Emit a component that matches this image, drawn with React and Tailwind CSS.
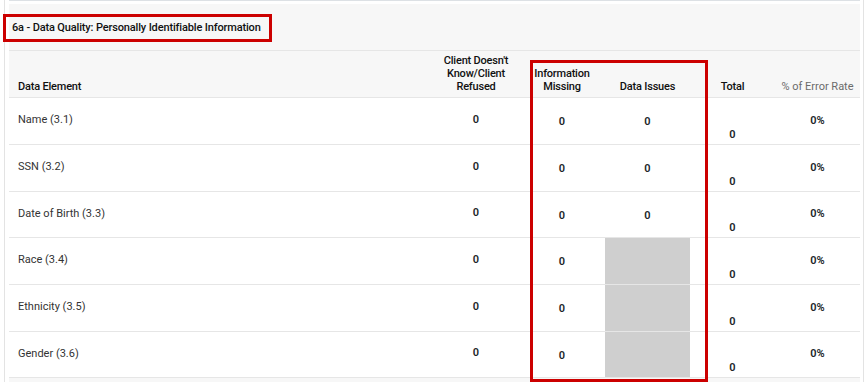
import React from "react";

const rows = [
  { name: "Name (3.1)", issues: "0", h: "h-[47px]" },
  { name: "SSN (3.2)", issues: "0", h: "h-[47px]" },
  { name: "Date of Birth (3.3)", issues: "0", h: "h-[46px]" },
  { name: "Race (3.4)", issues: null, h: "h-[47px]" },
  { name: "Ethnicity (3.5)", issues: null, h: "h-[47px]" },
  { name: "Gender (3.6)", issues: null, h: "h-[46px]" },
];

export default function App() {
  return (
    <div className="relative w-[866px] h-[382px] overflow-hidden bg-white font-['Roboto',sans-serif] text-[11px] text-[#212529]">
      <div className="flex h-full">
        <div className="w-[4px] shrink-0" />
        <div className="w-px shrink-0 bg-[#e3e3e3]" />
        <div className="w-[4px] shrink-0" />
        <div className="w-[851px] shrink-0 flex flex-col">
          <div className="h-px bg-[#dde1e5]" />
          <div className="h-[3px]" />
          <div className="flex-1 bg-[#f7f7f7] flex flex-col">
            <div className="h-[47px] flex items-center pl-[3px] pt-[2px] border-b border-[#e6e6e6] text-[#111] font-medium tracking-[-0.15px]">
              6a - Data Quality: Personally Identifiable Information
            </div>
            <div className="grid grid-cols-[424px_86px_86px_85px_85px_85px] h-[47px] border-b border-[#e6e6e6] leading-[13px] text-[#111] font-medium tracking-[-0.2px]">
              <div className="flex items-end pl-[9px] pb-[4px]">Data Element</div>
              <div className="flex items-end justify-center text-center pb-[4px]">
                <span>Client Doesn't<br />Know/Client<br />Refused</span>
              </div>
              <div className="flex items-end justify-center text-center pb-[4px]">
                <span>Information<br />Missing</span>
              </div>
              <div className="flex items-end justify-center text-center pb-[4px]">Data Issues</div>
              <div className="flex items-end justify-center text-center pb-[4px]">Total</div>
              <div className="flex items-end justify-center text-center pb-[4px] text-[#6b6b6b] font-normal tracking-normal">% of Error Rate</div>
            </div>
            <div className="bg-white">
              {rows.map((r) => (
                <div key={r.name} className={`grid grid-cols-[424px_86px_86px_85px_85px_85px] ${r.h} leading-[13px]`}>
                  <div className="flex items-center pl-[9px] pb-[3px] border-b border-[#e6e6e6] text-[#333]">{r.name}</div>
                  <div className="flex items-center justify-center pb-[4px] border-b border-[#e6e6e6] font-semibold">0</div>
                  <div className="flex items-center justify-center pt-[1px] border-b border-[#e6e6e6] font-semibold">0</div>
                  {r.issues !== null ? (
                    <div className="flex items-center justify-center pt-[1px] border-b border-[#e6e6e6] font-semibold">{r.issues}</div>
                  ) : (
                    <div className="bg-[#cfcfcf] border-b border-[#e6e6e6]" />
                  )}
                  <div className="flex items-end justify-center pb-[3px] border-b border-[#e6e6e6] font-semibold">0</div>
                  <div className="flex items-center justify-center pb-[2px] border-b border-[#e6e6e6] font-semibold">0%</div>
                </div>
              ))}
            </div>
          </div>
        </div>
        <div className="w-[3px] shrink-0" />
        <div className="w-px shrink-0 bg-[#e3e3e3]" />
      </div>
      <div className="absolute left-[3px] top-[14px] w-[269px] h-[28px] border-[3px] border-[#cc0000]" />
      <div className="absolute left-[530px] top-[60px] w-[178px] h-[322px] border-[3px] border-[#cc0000]" />
    </div>
  );
}
